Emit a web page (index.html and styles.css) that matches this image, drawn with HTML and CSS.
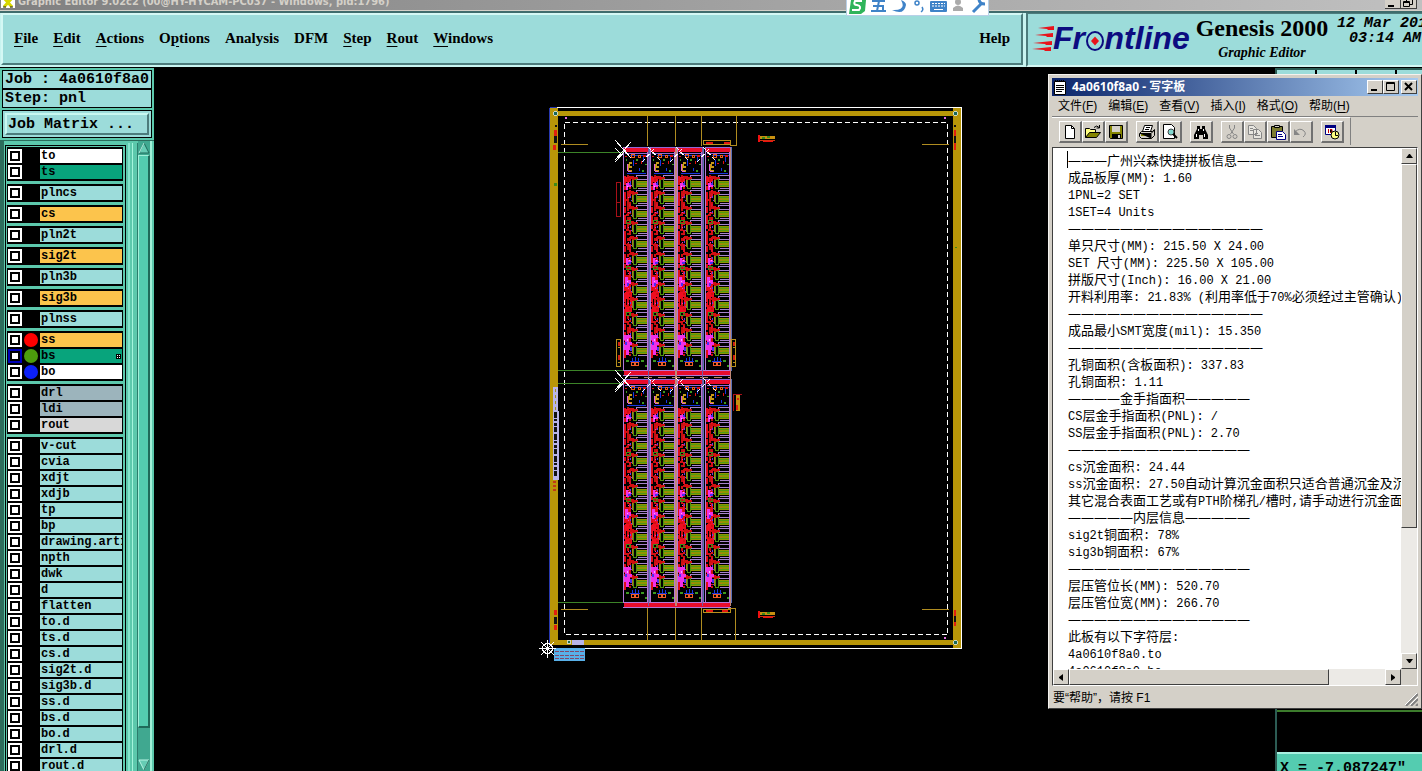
FILE: index.html
```html
<!DOCTYPE html>
<html lang="zh-CN">
<head>
<meta charset="utf-8">
<title>Graphic Editor</title>
<link rel="stylesheet" href="styles.css">
</head>
<body>
<header class="titlebar">
  <svg class="app-icon" width="16" height="9" viewBox="0 0 16 9"><path fill="#fff" d="M1 0h14v8H1z"/><path stroke="#d8d800" stroke-width="3" d="M4 -2l8 9M12 -2l-8 9"/><path stroke="#222" d="M3 7h3M10 7h3"/></svg>
  <h1>Graphic Editor 9.02c2 (00@HY-HYCAM-PC037 - Windows, pid:1796)</h1>
  <div class="main-buttons"><button aria-label="Minimize"><svg width="16" height="8"><path d="M3 5h6v2H3z"/></svg></button><button aria-label="Restore"><svg width="16" height="8"><path fill="none" stroke="#000" d="M5.500 2V-1H11.500V4.500H9M2.500 1.500h6v5h-6zM2.500 2.500h6"/></svg></button></div>
</header>
<div class="ime" aria-label="Input method">
  <svg width="142" height="16" viewBox="0 0 142 16"><path fill="#2fb45a" d="M4 0h15l-1 11-4 3H2z"/><path fill="none" stroke="#fff" stroke-width="2" d="M15 1H8Q6 5 10 5Q15 6 12 10H5"/><g fill="none" stroke="#3f83c8" stroke-width="2"><path d="M25 1h13M24 11h15M32 1l-2 10M26 6h10v5"/></g><path fill="#3f83c8" d="M54 0q6 11-9 10q12 6 14-5q0-3-5-5z"/><g stroke="#3f83c8" fill="none" stroke-width="1.500"><circle cx="70" cy="3" r="2"/><path d="M75 7q2 3-1 5"/></g><rect x="83" y="1" width="17" height="11" rx="1" fill="#3f83c8"/><path stroke="#fff" stroke-dasharray="2 1" d="M85 3.500h13M85 6h13"/><path stroke="#fff" d="M87 9.500h9"/><g fill="#aaa"><circle cx="111" cy="2" r="3"/><path d="M106 11V8q5-5 10 0v3z"/></g><path stroke="#3f83c8" stroke-width="3" fill="none" d="M126 12l8-8M132 -1q0 5 6 5"/></svg>
</div>

<div class="topbar">
  <nav class="menubar">
    <button><u>F</u>ile</button><button><u>E</u>dit</button><button><u>A</u>ctions</button><button>O<u>p</u>tions</button><button>Analysis</button><button>DFM</button><button><u>S</u>tep</button><button><u>R</u>out</button><button><u>W</u>indows</button><button class="help">Help</button>
  </nav>
  <div class="brand">
    <svg class="logo" width="162" height="34" viewBox="0 0 162 34">
      <g fill="#e8141c"><path d="M6 4l16-2v4h-6l-1-1zM3 11l18-2v4h-6l-1-1zM1 19l19-2v4h-6l-1-1zM0 25l19-2v4h-6l-1-1z"/></g>
      <text x="21" y="25" class="logo-text">Fr<tspan fill="none">o</tspan>ntline</text>
      <ellipse cx="63" cy="17" rx="8" ry="9" fill="none" stroke="#0c0c80" stroke-width="2"/>
      <path fill="#e8141c" d="M63 12.500l4 4.500-4 4.500-4-4.500z"/>
    </svg>
    <div class="product"><strong>Genesis 2000</strong><em>Graphic Editor</em></div>
    <div class="clock"><span>12 Mar 201</span><span>03:14 AM</span></div>
  </div>
</div>

<main class="workspace">
  <aside class="sidebar">
    <div class="job-box">Job : 4a0610f8a0</div>
    <div class="job-box">Step: pnl</div>
    <div class="matrix-frame"><button class="matrix">Job Matrix ...</button></div>
    <div class="layer-area">
      <div class="layers">
        <div class="group">
          <div class="row"><input type="checkbox" id="l1"><i></i><label for="l1" class="white">to</label></div>
          <div class="row"><input type="checkbox" id="l2"><i></i><label for="l2" class="green">ts</label></div>
        </div>
        <div class="group"><div class="row"><input type="checkbox" id="l3"><i></i><label for="l3">plncs</label></div></div>
        <div class="group"><div class="row"><input type="checkbox" id="l4"><i></i><label for="l4" class="amber">cs</label></div></div>
        <div class="group"><div class="row"><input type="checkbox" id="l5"><i></i><label for="l5">pln2t</label></div></div>
        <div class="group"><div class="row"><input type="checkbox" id="l6"><i></i><label for="l6" class="amber">sig2t</label></div></div>
        <div class="group"><div class="row"><input type="checkbox" id="l7"><i></i><label for="l7">pln3b</label></div></div>
        <div class="group"><div class="row"><input type="checkbox" id="l8"><i></i><label for="l8" class="amber">sig3b</label></div></div>
        <div class="group"><div class="row"><input type="checkbox" id="l9"><i></i><label for="l9">plnss</label></div></div>
        <div class="group">
          <div class="row"><input type="checkbox" id="l10"><i class="dot red"></i><label for="l10" class="amber">ss</label></div>
          <div class="row"><input type="checkbox" id="l11" class="active"><i class="dot lime"></i><label for="l11" class="green">bs<svg width="5" height="5"><path d="M0 0h5v5H0z"/><path fill="#fff" d="M1 1h1v1H1zM3 1h1v1H3zM1 3h1v1H1zM3 3h1v1H3z"/></svg></label></div>
          <div class="row"><input type="checkbox" id="l12"><i class="dot blue"></i><label for="l12" class="white">bo</label></div>
        </div>
        <div class="group">
          <div class="row"><input type="checkbox" id="l13"><i></i><label for="l13" class="slate">drl</label></div>
          <div class="row"><input type="checkbox" id="l14"><i></i><label for="l14" class="slate">ldi</label></div>
          <div class="row"><input type="checkbox" id="l15"><i></i><label for="l15" class="grey">rout</label></div>
        </div>
        <div class="group">
          <div class="row"><input type="checkbox" id="l16"><i></i><label for="l16">v-cut</label></div>
          <div class="row"><input type="checkbox" id="l17"><i></i><label for="l17">cvia</label></div>
          <div class="row"><input type="checkbox" id="l18"><i></i><label for="l18">xdjt</label></div>
          <div class="row"><input type="checkbox" id="l19"><i></i><label for="l19">xdjb</label></div>
          <div class="row"><input type="checkbox" id="l20"><i></i><label for="l20">tp</label></div>
          <div class="row"><input type="checkbox" id="l21"><i></i><label for="l21">bp</label></div>
          <div class="row"><input type="checkbox" id="l22"><i></i><label for="l22">drawing.art1</label></div>
          <div class="row"><input type="checkbox" id="l23"><i></i><label for="l23">npth</label></div>
          <div class="row"><input type="checkbox" id="l24"><i></i><label for="l24">dwk</label></div>
          <div class="row"><input type="checkbox" id="l25"><i></i><label for="l25">d</label></div>
          <div class="row"><input type="checkbox" id="l26"><i></i><label for="l26">flatten</label></div>
          <div class="row"><input type="checkbox" id="l27"><i></i><label for="l27">to.d</label></div>
          <div class="row"><input type="checkbox" id="l28"><i></i><label for="l28">ts.d</label></div>
          <div class="row"><input type="checkbox" id="l29"><i></i><label for="l29">cs.d</label></div>
          <div class="row"><input type="checkbox" id="l30"><i></i><label for="l30">sig2t.d</label></div>
          <div class="row"><input type="checkbox" id="l31"><i></i><label for="l31">sig3b.d</label></div>
          <div class="row"><input type="checkbox" id="l32"><i></i><label for="l32">ss.d</label></div>
          <div class="row"><input type="checkbox" id="l33"><i></i><label for="l33">bs.d</label></div>
          <div class="row"><input type="checkbox" id="l34"><i></i><label for="l34">bo.d</label></div>
          <div class="row"><input type="checkbox" id="l35"><i></i><label for="l35">drl.d</label></div>
          <div class="row"><input type="checkbox" id="l36"><i></i><label for="l36">rout.d</label></div>
        </div>
      </div>
      <div class="ridge"></div>
      <div class="layer-scroll">
        <svg width="12" height="14" viewBox="0 0 12 14"><path fill="#66ccb4" stroke="#1f6a5a" d="M6 2l5 10H1z"/><path stroke="#b8f4e4" d="M6 2L1 12" fill="none"/></svg>
        <div class="thumb"></div>
        <svg width="12" height="12" viewBox="0 0 12 12"><path fill="#66ccb4" stroke="#b8f4e4" d="M1 1h10L6 11z"/><path stroke="#1f6a5a" d="M11 1L6 11" fill="none"/></svg>
      </div>
    </div>
  </aside>

  <section class="canvas">
    <svg viewBox="154 68 1121 703" preserveAspectRatio="xMinYMin meet" shape-rendering="crispEdges" aria-label="Panel layout">
      <defs>
        <g id="cell">
          <path fill="none" stroke="#a684cc" d="M13.500 .500h11v4h-11z"/>
          <path fill="#8f9400" d="M14 6h10v6H14z"/>
          <path fill="#4f9a10" d="M13 7h11v1H13zM14 10h10v1H14z"/>
          <path fill="#a684cc" d="M15 13h9v1h-9z"/>
          <path fill="none" stroke="#4f9010" d="M10.500 4.500h3v9h-3z"/>
          <path fill="#b07818" d="M9 5h1v7H9zM15 9h2v1h-2z"/>
          <path fill="#d01010" d="M7 1h4v1h4v2h-3v1H9V4H6V2h1zM4 3h2v3H4zM3 9h3v2H3zM6 12h2v2H6z"/>
          <path fill="#6040e8" d="M7 6h1v2H7zM8 10h1v1H8z"/>
          <path fill="#e838c0" d="M5 7h1v1H5z"/>
        </g>
        <g id="star" stroke="#fff" fill="none">
          <path d="M-8 -11L8 7M-8 9L8 -9M-8 -3L-1 4M-8 11L3 -1"/>
        </g>
        <g id="unit">
          <path fill="#e80c2c" d="M1 1h24v4H1z"/>
          <path fill="#9068d8" d="M0 0h26v1H0zM2 6h22v1H2z"/>
          <path fill="#1838e0" d="M7 8h17v1H7zM4 26h19v1H4zM10 13h1v6h-1zM20 10h1v5h-1zM16 21h1v3h-1z"/>
          <path fill="none" stroke="#f05c18" d="M8.500 7.500h3v3h-3zM15.500 8.500h2v2h-2z"/>
          <path fill="#c89a18" d="M6 15h3v2H7v2h2v2H6v2h3v2H5V17h1z"/>
          <path fill="#3c9a20" d="M13 12h2v2h-2zM19 23h2v2h-2zM3 12h1v2H3zM22 17h2v1h-2z"/>
          <path fill="#e01010" d="M20 8h3v2h-3zM12 16h2v1h-2zM18 14h1v3h-1zM2 9h2v1H2z"/>
          <path fill="#e060e0" d="M4 17h1v7H4zM5 24h3v1H5z"/>
          <path stroke="#e00c18" stroke-width="2" stroke-dasharray="9 1 4 2 14 1 6 2" d="M2 29V211"/>
          <path stroke="#c01010" stroke-width="2" stroke-dasharray="3 2 7 4 2 3" d="M5 28V206"/>
          <path stroke="#e01028" stroke-width="2" stroke-dasharray="5 4 2 3 8 5" d="M7 29V206"/>
          <path fill="#f00c20" d="M3 128h5v20H3zM2 145h7v20H2zM2 30h6v5H2z"/>
          <path fill="#000" d="M4 133h1v7H4zM6 150h1v9H6zM3 152h1v6H3z"/>
          <use href="#cell" y="28"/><use href="#cell" y="43"/><use href="#cell" y="58"/><use href="#cell" y="73"/><use href="#cell" y="88"/><use href="#cell" y="104"/><use href="#cell" y="119"/><use href="#cell" y="134"/><use href="#cell" y="149"/><use href="#cell" y="165"/><use href="#cell" y="180"/><use href="#cell" y="195"/>
          <path fill="#f030e8" d="M3 36h3v2h2v2H5v3H3zM3 111h2v2h3v3H6v2H3zM2 130h3v3h3v4H5v3H2zM1 188h7v3h-2v4h3v3H7v5H6v5H3v-5H1v-6h1z"/>
          <path fill="#4830f0" d="M6 36h2v2H6zM5 115h3v2H5zM4 136h2v3H4zM2 195h2v3H2zM7 200h2v4H7z"/>
          <path fill="#f8b0f8" d="M4 39h1v1H4zM6 113h1v1H6zM4 134h1v1H4zM4 192h1v2H4z"/>
          <path fill="none" stroke="#3c8a18" d="M3.500 73.500h4v3h-4zM3.500 119.500h4v3h-4zM3.500 165.500h4v3h-4z"/>
          <path fill="#1838e0" d="M9 211h1v4H9zM12 210h1v5h-1zM15 211h1v4h-1zM7 214h10v1H7z"/>
          <path fill="none" stroke="#f05c28" d="M8.500 215.500h3v3h-3zM12.500 215.500h3v3h-3z"/>
          <path fill="#3c9a20" d="M3 213h3v2H3zM18 213h3v2h-3zM22 218h2v2h-2z"/>
          <path fill="#b478d8" d="M0 0h1v224H0zM24 5h1v219h-1z"/>
          <path fill="#5c70b8" d="M26 0h1v224h-1z"/>
        </g>
        <g id="coupon"><path fill="none" stroke="#b8901c" d="M0.500 0.500h4v27h-4z"/><path fill="#d02010" d="M2 3h2v4H2zM2 16h2v5H2z"/><path fill="#b8901c" d="M2 8h2v1H2zM2 23h2v1H2z"/></g>
        <g id="mark"><path fill="#f01010" d="M0 0h2v7H0zM5 6h10v1H5z"/><path fill="#c89010" d="M2 1h15v3H2z"/><path fill="#d03010" d="M2 5h15v1H2z"/><path fill="#3c8a18" d="M4 2h3v2H4zM9 1h3v2H9z"/></g>
      </defs>
      <path fill="#b89608" d="M550 108h8v536h-8zM953 108h8v540h-8zM557 111h396v5H557zM550 640h404v5H550z"/>
      <path stroke="#2838b0" d="M549.500 108V645M953 107.500h8M550 107.500h8"/>
      <path stroke="#fff" fill="none" d="M557 107.500H961.500V648.500H548"/>
      <rect x="564.500" y="122.500" width="383" height="512" fill="none" stroke="#fff" stroke-dasharray="5 3"/>
      <path fill="none" stroke="#b08c20" d="M647.500 116V146M675.500 116V146M701.500 116V146M736.500 116V145H730M561 144.500h27M922 144.500h27M561 609.500h27M922 609.500h27M647.500 608V640M675.500 608V640M701.500 608V640M735.500 640V608.500H728"/>
      <path stroke="#3c8428" d="M558 152.500h66M558 370.500h66M558 383.500h66M558 602.500h66"/>
      <use href="#unit" x="623" y="147"/><use href="#unit" x="650" y="147"/><use href="#unit" x="677" y="147"/><use href="#unit" x="705" y="147"/>
      <use href="#unit" x="623" y="379"/><use href="#unit" x="650" y="379"/><use href="#unit" x="677" y="379"/><use href="#unit" x="705" y="379"/>
      <path fill="#e80c2c" d="M624 371h106v4H624zM624 603h106v4H624z"/>
      <path stroke="#b478d8" d="M623 370.500h108M623 375.500h108M623 602.500h108M623 607.500h108"/>
      <path stroke="#c08060" stroke-dasharray="8 6" d="M630 377.500h100"/>
      <path fill="#c08878" d="M675 148h2v458h-2zM730 148h1v458h-1z"/>
      <path fill="#7858a0" d="M648 148h1v458h-1zM702 148h1v458h-1z"/>
      <use href="#star" x="623" y="151"/><use href="#star" x="623" y="381"/>
      <path stroke="#fff" stroke-dasharray="4 3" d="M642 162l14-15M648 147l14 15M670 162l14-15M676 147l14 15M697 162l14-15M703 147l14 15M642 392l14-14M648 378l14 14M670 392l14-14M676 378l14 14M697 392l14-14M703 378l14 14"/>
      <path fill="none" stroke="#a81018" d="M616.500 182.500h4v20h-4zM616.500 202.500h4v14h-4z"/>
      <use href="#coupon" x="616" y="339"/><use href="#coupon" x="731" y="339"/>
      <path fill="none" stroke="#b8901c" d="M703.500 140.500h27v4h-27zM703.500 609.500h27v3h-27z"/>
      <path fill="#e01810" d="M706 142h7v2h-7zM724 142h6v2h-6zM706 610h7v2h-7zM722 610h6v2h-6z"/>
      <path fill="none" stroke="#a81018" d="M733.500 411V394.500h8"/><path fill="#c89010" d="M736 395h4v16h-4z"/><path fill="#e02010" d="M737 398h2v2h-2zM736 405h2v5h-2z"/>
      <use href="#mark" x="758" y="135"/><use href="#mark" x="758" y="611"/>
      <path fill="#e02010" d="M554 130h3v6h-3zM553 145h3v5h-3zM954 130h2v20h-2zM554 610h3v5h-3zM554 625h3v5h-3zM954 610h2v16h-2z"/><path fill="#111" d="M555 125h2v2h-2zM554 136h3v7h-3zM954 125h2v2h-2zM954 136h2v7h-2zM554 617h3v7h-3zM954 616h2v6h-2z"/><path fill="#e070e0" d="M565 117h2v2h-2zM944 117h2v2h-2zM944 637h2v2h-2z"/><path fill="#3c8a18" d="M554 183h3v3h-3zM955 247h2v1h-2z"/>
      <g fill="#186858" stroke="#d0d8c0"><circle cx="555.500" cy="113.500" r="2"/><circle cx="955.500" cy="113.500" r="2"/><circle cx="955.500" cy="642.500" r="2"/><circle cx="569" cy="642" r="2"/></g>
      <path fill="#b8b4e8" d="M553 387h5v24h-5zM553 411h6v69h-6z"/>
      <path stroke="#111" stroke-width="3" stroke-dasharray="6 1 2 2 3 1 5 2" d="M555.500 412V478"/><path stroke="#a09020" stroke-dasharray="3 3" d="M555.500 389V410"/>
      <path stroke="#c03818" stroke-width="3" stroke-dasharray="2 2" d="M554 481V491"/>
      <path fill="#b8b4e8" d="M572 640h12v5h-12z"/>
      <path fill="#58b0e8" d="M554 648h31v13h-31z"/>
      <path stroke="#804868" stroke-dasharray="4 1" d="M555 651.500h29M555 655.500h29M555 658.500h29"/>
      <g stroke="#fff" fill="none"><circle cx="547.500" cy="648.500" r="5"/><path d="M539 648.500h17M547.500 640v18M541 642l13 13M541 655l13-13"/></g>
    </svg>
  </section>

  <aside class="tools">
    <div class="tool-tabs"><span></span><span></span><span></span><span></span></div>
    <div class="preview"></div>
    <output class="coords">X = -7.087247"</output>
  </aside>
</main>

<section class="wordpad" aria-label="写字板">
  <div class="wp-title">
    <svg width="16" height="16" viewBox="0 0 16 16"><path fill="#fff" stroke="#000" d="M2.500 2.500h11v13h-11z"/><path stroke="#000" d="M4 6.500h8M4 8.500h8M4 10.500h8M4 12.500h6"/><path stroke="#000" stroke-width="2" stroke-dasharray="1 1" d="M3 2h10"/></svg>
    <h2>4a0610f8a0 - 写字板</h2>
    <button aria-label="最小化"><svg width="12" height="10"><path d="M2 7h6v2H2z"/></svg></button><button aria-label="最大化"><svg width="12" height="10"><path fill="none" stroke="#000" d="M1.500 .500h8v8h-8zM1 1.500h9"/></svg></button><button class="close" aria-label="关闭"><svg width="12" height="10"><path stroke="#000" stroke-width="2" d="M2 1l7 7M9 1L2 8"/></svg></button>
  </div>
  <nav class="wp-menu"><button>文件(<u>F</u>)</button><button>编辑(<u>E</u>)</button><button>查看(<u>V</u>)</button><button>插入(<u>I</u>)</button><button>格式(<u>O</u>)</button><button>帮助(<u>H</u>)</button></nav>
  <div class="wp-tools">
    <div class="set">
      <button aria-label="新建"><svg viewBox="0 0 16 16"><path fill="#fff" stroke="#000" d="M3.500 1.500h6l3 3v10h-9z"/><path fill="none" stroke="#000" d="M9.500 1.500v3h3"/></svg></button>
      <button aria-label="打开"><svg viewBox="0 0 16 16"><path fill="#ffff80" stroke="#000" d="M.500 13.500v-9h4l1 1h5v3"/><path fill="#848400" stroke="#000" d="M.500 13.500l4-5h11l-4 5z"/><path fill="none" stroke="#000" d="M9 3.500q3-3 5 0M14.500 1v3h-3"/></svg></button>
      <button aria-label="保存"><svg viewBox="0 0 16 16"><path fill="#848400" stroke="#000" d="M1.500 1.500h13v13h-12l-1-1z"/><path fill="#d4d0c8" d="M4 2h8v6H4z"/><path d="M4 10h9v5H4z"/><path fill="#d4d0c8" d="M10 11h2v3h-2z"/></svg></button>
    </div>
    <div class="set">
      <button aria-label="打印"><svg viewBox="0 0 16 16"><path fill="#fff" stroke="#000" d="M5.500 1.500h8l-2 6h-8z"/><path stroke="#000" d="M7 3.500h4M6 5.500h4"/><path fill="#d4d0c8" stroke="#000" d="M2.500 7.500h11l2-2v6l-3 3h-10l-2-2v-3z"/><path stroke="#848400" stroke-width="2" d="M2 11h9"/><path stroke="#000" d="M1 9.500h11v5M12 9.500l3-3"/></svg></button>
      <button aria-label="打印预览"><svg viewBox="0 0 16 16"><path fill="#fff" stroke="#000" d="M1.500 .500h8l3 3v11h-11z"/><circle cx="9" cy="8" r="3" fill="#80d8d0" stroke="#444"/><path stroke="#000" stroke-width="2" d="M11 10l4 4"/></svg></button>
    </div>
    <div class="set">
      <button aria-label="查找"><svg viewBox="0 0 16 16"><path d="M4 2h3v3h2V2h3v3l3 6v4h-5v-4H6v4H1v-4l3-6z"/><path stroke="#fff" d="M5.500 5v2M3.500 10v3M10.500 5v2M11.500 10v3"/></svg></button>
    </div>
    <div class="set">
      <button aria-label="剪切"><svg viewBox="0 0 16 16"><g fill="none" stroke="#868686"><path d="M5.500 1v3l4 6M10.500 1v3l-4 6"/><circle cx="5" cy="12.500" r="2"/><circle cx="11" cy="12.500" r="2"/></g></svg></button>
      <button aria-label="复制"><svg viewBox="0 0 16 16"><g fill="#e8e6e0" stroke="#868686"><path d="M1.500 1.500h5l3 3v6h-8zM6.500 5.500h5l3 3v6h-8z"/><path d="M3 4.500h3M3 6.500h3M8 9.500h3M8 11.500h5"/></g></svg></button>
      <button aria-label="粘贴"><svg viewBox="0 0 16 16"><path fill="#7c7c30" stroke="#000" d="M1.500 2.500h11v11h-11z"/><path fill="#d4d0c8" stroke="#000" d="M4.500 3.500v-2h5v2z"/><path fill="#fff" stroke="#000080" d="M6.500 7.500h6l3 3v5h-9z"/><path stroke="#000080" d="M8 10.500h4M8 12.500h5"/></svg></button>
      <button aria-label="撤消"><svg viewBox="0 0 16 16"><path fill="none" stroke="#868686" d="M2 8q5-5 9-1q3 3-1 6"/><path fill="#868686" d="M1 5v6h6z"/></svg></button>
    </div>
    <div class="set">
      <button aria-label="日期/时间"><svg viewBox="0 0 16 16"><path fill="#fff" stroke="#000080" d="M1.500 1.500h10v9h-10z"/><path fill="#000080" d="M1 1h11v3H1z"/><path stroke="#c00000" d="M4.500 5v4M6 5.500h2v3H6"/><circle cx="11" cy="11" r="4" fill="#ffff80" stroke="#000"/><path fill="none" stroke="#000" d="M11.500 8v3.500H14"/></svg></button>
    </div>
  </div>
  <div class="wp-body">
    <div class="doc" role="textbox" aria-multiline="true" aria-label="文档" contenteditable="true" spellcheck="false">
      <p class="caret"><span>———广州兴森快捷拼板信息——</span></p>
      <p><span>成品板厚</span>(MM): 1.60</p>
      <p>1PNL=2 SET</p>
      <p>1SET=4 Units</p>
      <p><span>———————————————</span></p>
      <p><span>单只尺寸</span>(MM): 215.50 X 24.00</p>
      <p>SET <span>尺寸</span>(MM): 225.50 X 105.00</p>
      <p><span>拼版尺寸</span>(Inch): 16.00 X 21.00</p>
      <p><span>开料利用率</span>: 21.83% (<span>利用率低于</span>70%<span>必须经过主管确认</span>)</p>
      <p><span>———————————————</span></p>
      <p><span>成品最小</span>SMT<span>宽度</span>(mil): 15.350</p>
      <p><span>———————————————</span></p>
      <p><span>孔铜面积</span>(<span>含板面积</span>): 337.83</p>
      <p><span>孔铜面积</span>: 1.11</p>
      <p><span>————金手指面积—————</span></p>
      <p>CS<span>层金手指面积</span>(PNL): /</p>
      <p>SS<span>层金手指面积</span>(PNL): 2.70</p>
      <p><span>——————————————</span></p>
      <p>cs<span>沉金面积</span>: 24.44</p>
      <p>ss<span>沉金面积</span>: 27.50<span>自动计算沉金面积只适合普通沉金及沉</span></p>
      <p><span>其它混合表面工艺或有</span>PTH<span>阶梯孔</span>/<span>槽时</span>,<span>请手动进行沉金面</span></p>
      <p><span>—————内层信息—————</span></p>
      <p>sig2t<span>铜面积</span>: 78%</p>
      <p>sig3b<span>铜面积</span>: 67%</p>
      <p><span>——————————————</span></p>
      <p><span>层压管位长</span>(MM): 520.70</p>
      <p><span>层压管位宽</span>(MM): 266.70</p>
      <p><span>——————————————</span></p>
      <p><span>此板有以下字符层</span>:</p>
      <p>4a0610f8a0.to</p>
      <p>4a0610f8a0.bo</p>
    </div>
    <div class="vscroll"><button aria-label="向上"><svg width="7" height="4"><path d="M3 0h1l3 4H0z"/></svg></button><div class="vthumb"></div><button aria-label="向下"><svg width="7" height="4"><path d="M0 0h7L4 4H3z"/></svg></button></div>
    <div class="hscroll"><button aria-label="向左"><svg width="4" height="7"><path d="M0 3v1l4 3V0z"/></svg></button><div class="hthumb"></div><button aria-label="向右"><svg width="4" height="7"><path d="M0 0v7l4-3V3z"/></svg></button></div>
    <div class="corner"></div>
  </div>
  <footer class="wp-status"><span>要“帮助”，请按 F1</span><svg width="13" height="13"><path stroke="#808080" stroke-width="2" d="M1 13L13 1M6 13l7-7M11 13l2-2"/><path stroke="#fff" d="M0 12L12 0M5 12l8-8"/></svg></footer>
</section>
</body>
</html>
```
FILE: styles.css
```css
* { box-sizing: border-box; margin: 0; }
body { height: 100vh; display: flex; flex-direction: column; position: relative; overflow: hidden; background: #000; color: #000; font-family: "Liberation Serif", serif; }
button { font: inherit; color: inherit; border: 0; background: none; padding: 0; }
svg { display: block; }

.titlebar { flex: none; height: 11px; display: flex; align-items: flex-start; gap: 2px; padding-right: 5px; overflow: hidden; border-bottom: 1px solid #d4d0c8; background: linear-gradient(90deg, #808080, #c0c0c0); }
.titlebar h1 { flex: 1; margin-top: -4px; color: #d4d0c8; font: bold 11px/12px "DejaVu Sans Condensed", "DejaVu Sans", sans-serif; white-space: nowrap; }
.main-buttons { display: flex; }
.main-buttons button { width: 16px; height: 9px; background: #d4d0c8; border-right: 1px solid #404040; border-bottom: 1px solid #404040; overflow: hidden; }
.ime { position: absolute; top: 0; left: 846px; z-index: 3; background: #fff; border: 1px solid #b8d0e8; border-top: 0; width: 143px; height: 16px; overflow: hidden; }

.topbar { flex: none; height: 57px; display: flex; background: #c8f4f0; border-top: 2px solid #3f6c6c; border-bottom: 1px solid #000; }
.menubar { flex: 1; display: flex; align-items: center; gap: 15px; margin: 0 3px 2px 1px; padding: 0 11px 2px; background: #9cdcda; border: 2px solid #d4f8f4; border-right-color: #4c7c7c; border-bottom-color: #4c7c7c; font-weight: bold; font-size: 15px; }
.menubar u { text-underline-offset: 3px; }
.wp-menu u { text-underline-offset: 2px; }
.help { margin-left: auto; }
.brand { flex: none; width: 396px; display: flex; background: #9cdcda; border-left: 2px solid #4c7c7c; border-top: 1px solid #4c7c7c; border-bottom: 2px solid #d4f8f4; padding-left: 4px; overflow: hidden; white-space: nowrap; }
.logo { flex: none; margin-top: 10px; }
.logo-text { font: italic bold 32px "Liberation Sans", sans-serif; fill: #0c0c80; }
.product { flex: none; width: 140px; display: flex; flex-direction: column; align-items: center; padding-right: 4px; }
.product strong { font-size: 24px; line-height: 28px; }
.product em { font-size: 14px; font-weight: bold; line-height: 22px; }
.clock { display: flex; flex-direction: column; flex: none; width: 90px; padding: 2px 0 0 3px; font: italic bold 15px/15px "Liberation Mono", monospace; }
.clock span + span { padding-left: 12px; }

.workspace { flex: 1; min-height: 0; display: flex; }
.sidebar { flex: none; width: 154px; display: flex; flex-direction: column; background: #5cc8ac; padding-top: 2px; font: bold 15px/17px "Liberation Mono", monospace; }
.job-box { margin: 0 2px; height: 19px; padding-left: 2px; border: 1px solid #000; background: #9cdcda; white-space: nowrap; }
.matrix-frame { margin: 2px 2px 2px; padding: 2px; border: 1px solid #000; background: #9cdcda; }
.matrix { display: block; width: 100%; height: 22px; text-align: left; padding-left: 1px; border: 2px solid #c8f8f0; border-right-color: #4c7c7c; border-bottom-color: #4c7c7c; }
.layer-area { flex: 1; min-height: 0; display: flex; border-top: 1px solid #2c6c5c; border-left: 4px solid #2c6c5c; overflow: hidden; }
.layers { flex: none; width: 121px; margin: 4px 0 0 1px; padding: 1px 2px 0 1px; border: 1px solid #000; border-bottom: 0; display: flex; flex-direction: column; gap: 3px; font-size: 12px; line-height: 14px; }
.group { background: #000; padding: 1px; }
.row { height: 16px; display: flex; align-items: center; }
.row input { appearance: none; flex: none; margin: 0; width: 14px; height: 14px; border: 2px solid #fff; background: #fff; outline: 0; box-shadow: inset 0 0 0 2px #000; }
.row input.active { border-color: #0000b8; }
.row i { flex: none; width: 14px; height: 14px; margin: 0 2px; border-radius: 50%; }
.row .red { background: #f00; }
.row .lime { background: #4c9c0c; }
.row .blue { background: #0c20f8; }
.row label { flex: 1; min-width: 0; height: 14px; padding-left: 1px; display: flex; align-items: center; justify-content: space-between; background: #9cdcda; overflow: hidden; white-space: nowrap; }
.row label svg { margin-right: 1px; flex: none; }
.row .white { background: #fff; }
.row .green { background: #08a47c; }
.row .amber { background: #fcc44c; }
.row .slate { background: #9cb4bc; }
.row .grey { background: #d8d8d8; }
.ridge { flex: none; width: 12px; margin-top: 2px; background: linear-gradient(90deg, #5cc8ac 2px, #84e4cc 2px 4px, #5cc8ac 4px 6px, #a4f4dc 6px 7px, #5cc8ac 7px 11px, #2c7c6c 11px); }
.layer-scroll { flex: none; width: 14px; display: flex; flex-direction: column; align-items: center; background: #40a890; border-right: 2px solid #a0f0d8; }
.thumb { flex: 0 1 573px; width: 12px; margin-bottom: auto; background: #54ccb0; border: 1px solid #a0f0d8; border-right: 2px solid #1f6a5a; border-bottom: 2px solid #1f6a5a; }
.layer-scroll svg { flex: none; }

.canvas { flex: 1; min-width: 0; overflow: hidden; background: #000; }
.canvas > svg { width: 100%; }
.tools { flex: none; width: 147px; display: flex; flex-direction: column; border-left: 2px solid #2c5c54; overflow: hidden; }
.tool-tabs { flex: none; display: flex; gap: 2px; border-top: 2px solid #2c5c54; height: 10px; }
.tool-tabs span { flex: none; width: 38px; background: #9cdcda; }
.preview { flex: 1; background: linear-gradient(#000 632px, #3c7c2c 632px 634px, #000 634px); }
.coords { flex: none; height: 19px; overflow: hidden; background: #54ccb0; border-top: 2px solid #a8f0e0; padding: 6px 0 0 3px; font: bold 15px/18px "Liberation Mono", monospace; white-space: nowrap; }

.wordpad { position: absolute; top: 74px; right: 0; z-index: 2; width: 374px; padding: 3px 3px 2px; background: #d4d0c8; border: 1px solid #f4f2ee; border-right-color: #404040; border-bottom-color: #404040; font: 12px "Liberation Sans", "Noto Sans CJK SC", sans-serif; }
.wp-title { height: 18px; display: flex; align-items: center; padding-right: 1px; background: linear-gradient(90deg, #0a246a, #a6caf0); color: #fff; }
.wp-title h2 { flex: 1; padding-left: 4px; font: bold 12px/18px "Noto Sans", "Noto Sans CJK SC", sans-serif; white-space: nowrap; }
.wp-title button { width: 16px; height: 14px; padding: 1px; color: #000; background: #d4d0c8; border: 1px solid #fff; border-right-color: #404040; border-bottom-color: #404040; }
.wp-title .close { margin-left: 2px; }
.wp-menu { height: 21px; display: flex; align-items: center; gap: 11px; padding-left: 6px; border-bottom: 1px solid #808080; line-height: 18px; }
.wp-tools { height: 28px; display: flex; align-items: center; gap: 8px; width: 299px; padding-left: 7px; border-top: 1px solid #fff; border-right: 1px solid #808080; }
.set { display: flex; }
.set button { width: 23px; height: 22px; padding: 2px 2px 1px; border: 1px solid #fff; border-right: 2px solid #707070; border-bottom: 2px solid #707070; }
.set svg { width: 16px; height: 16px; }
.wp-body { display: grid; grid-template-columns: minmax(0, 1fr) 16px; grid-template-rows: 521px 16px; margin-top: 2px; border: 1px solid #404040; border-right-color: #fff; border-bottom-color: #fff; background: #d4d0c8; }
.doc { background: #fff; overflow: hidden; padding: 3px 0 0 15px; outline: 0; font: 12px/17px "Liberation Mono", "Noto Sans CJK SC", monospace; white-space: nowrap; }
.doc p { height: 17px; }
.doc p::before { content: "\200b"; font-family: "Noto Sans CJK SC", sans-serif; font-size: 13px; }
.doc span { font-family: "Noto Sans", "Noto Sans CJK SC", sans-serif; font-size: 13px; }
.caret { border-left: 1px solid #000; margin-left: -1px; }
.vscroll, .hscroll { display: flex; background: #eceae6; }
.vscroll { flex-direction: column; justify-content: space-between; }
.hscroll { justify-content: space-between; }
.vscroll button, .hscroll button, .vthumb, .hthumb { flex: none; min-width: 16px; min-height: 16px; display: grid; place-items: center; background: #d4d0c8; border: 1px solid #fff; border-right-color: #404040; border-bottom-color: #404040; }
.vthumb { height: 364px; margin-bottom: auto; }
.hthumb { width: 260px; margin-right: auto; }
.wp-status { height: 20px; display: flex; align-items: center; justify-content: space-between; padding-left: 1px; }
.wp-status svg { align-self: flex-end; }
```
